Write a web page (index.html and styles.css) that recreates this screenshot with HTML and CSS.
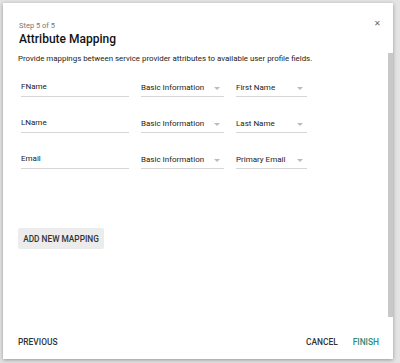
FILE: index.html
```html
<!DOCTYPE html>
<html lang="en">
<head>
    <meta charset="UTF-8">
    <title>Attribute Mapping</title>
    <link rel="stylesheet" href="styles.css">
</head>
<body>
    <div class="dialog">
        <!-- Header -->
        <div class="dialog-header">
            <div class="step">Step 5 of 5</div>
            <h2 class="title">Attribute Mapping</h2>
            <span class="close">&#x2715;</span>
        </div>

        <!-- Scrollable body -->
        <div class="dialog-body">
            <div class="content">
                <p class="intro">Provide mappings between service provider attributes to available user profile fields.</p>

                <div class="mapping-row">
                    <div class="text-field">FName</div>
                    <div class="select select-group">Basic Information<span class="arrow"></span></div>
                    <div class="select select-field">First Name<span class="arrow"></span></div>
                </div>
                <div class="mapping-row">
                    <div class="text-field">LName</div>
                    <div class="select select-group">Basic Information<span class="arrow"></span></div>
                    <div class="select select-field">Last Name<span class="arrow"></span></div>
                </div>
                <div class="mapping-row">
                    <div class="text-field">Email</div>
                    <div class="select select-group">Basic Information<span class="arrow"></span></div>
                    <div class="select select-field">Primary Email<span class="arrow"></span></div>
                </div>

                <button class="add-btn">ADD NEW MAPPING</button>
            </div>
            <div class="scrollbar"></div>
        </div>

        <!-- Footer -->
        <div class="dialog-footer">
            <button class="flat-btn">PREVIOUS</button>
            <div class="footer-right">
                <button class="flat-btn">CANCEL</button>
                <button class="flat-btn primary">FINISH</button>
            </div>
        </div>
    </div>
</body>
</html>
```

FILE: styles.css
```css
body {
    margin: 0;
    padding: 3px;
    background-color: #e4e4e4;
    font-family: Roboto, "Liberation Sans", sans-serif;
    width: 400px;
    height: 363px;
    box-sizing: border-box;
    overflow: hidden;
}

.dialog {
    width: 390px;
    height: 356px;
    background-color: white;
    box-shadow: 0px 1px 4px rgba(0, 0, 0, 0.35);
    display: flex;
    flex-direction: column;
}

.dialog-header {
    position: relative;
    padding: 18px 16px 0 16px;
    height: 32px;
}

.step {
    font-size: 7.5px;
    color: #777;
    line-height: 9px;
}

.title {
    margin: 2px 0 0 0;
    font-size: 12px;
    font-weight: 500;
    color: #111;
    line-height: 14px;
}

.close {
    position: absolute;
    right: 12px;
    top: 16px;
    font-size: 8px;
    color: #666;
}

.dialog-body {
    flex: 1;
    display: flex;
}

.content {
    flex: 1;
    padding: 0 0 0 15px;
}

.scrollbar {
    width: 5px;
    background-color: #c8c8c8;
}

.intro {
    margin: 0;
    padding-top: 1px;
    font-size: 7.9px;
    color: #222;
    line-height: 9px;
}

.mapping-row {
    display: flex;
    align-items: flex-end;
    height: 36px;
}

.text-field, .select {
    font-size: 8px;
    color: #222;
    border-bottom: 1px solid #d6d6d6;
    height: 16px;
    line-height: 12px;
    box-sizing: border-box;
    margin-bottom: 2px;
}

.text-field {
    width: 108px;
    margin-left: 3px;
    padding-top: 2px;
    height: 18px;
}

.select {
    position: relative;
    padding-top: 3px;
    height: 18px;
}

.select-group {
    width: 83px;
    margin-left: 12px;
}

.select-field {
    width: 71px;
    margin-left: 12px;
}

.arrow {
    position: absolute;
    right: 4px;
    top: 8px;
    width: 0;
    height: 0;
    border-left: 3px solid transparent;
    border-right: 3px solid transparent;
    border-top: 3px solid #bbb;
}

.add-btn {
    margin-top: 57px;
    background-color: #ececec;
    border: none;
    border-radius: 2px;
    font-family: Roboto, "Liberation Sans", sans-serif;
    font-size: 8.3px;
    font-weight: 500;
    color: #333;
    padding: 0;
    width: 86px;
    height: 21px;
}

.dialog-footer {
    height: 42px;
    display: flex;
    justify-content: space-between;
    align-items: center;
    padding: 8px 14px 0 15px;
    box-sizing: border-box;
}

.footer-right {
    display: flex;
    gap: 15px;
}

.flat-btn {
    background: none;
    border: none;
    padding: 0;
    font-family: Roboto, "Liberation Sans", sans-serif;
    font-size: 8.4px;
    font-weight: 500;
    color: #333;
}

.flat-btn.primary {
    color: #2e8b76;
}
```
